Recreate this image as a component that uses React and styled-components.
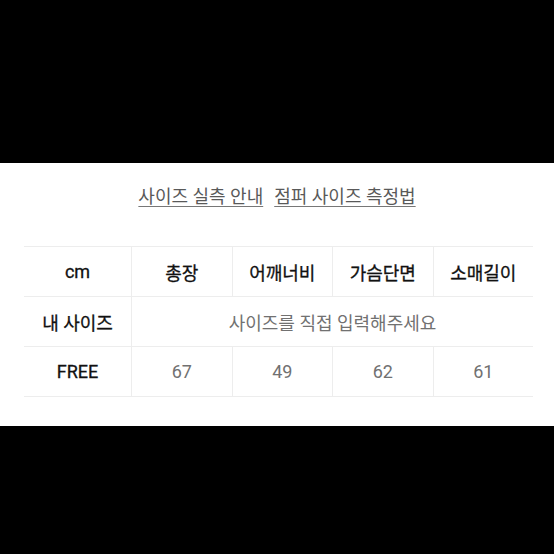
import React from "react";
import styled, { createGlobalStyle } from "styled-components";

const GlobalStyle = createGlobalStyle`
  html, body {
    margin: 0;
    padding: 0;
    background: #000;
  }
  body {
    font-family: Roboto, "Noto Sans CJK KR", sans-serif;
  }
`;

const columns = ["총장", "어깨너비", "가슴단면", "소매길이"];
const freeSize = [67, 49, 62, 61];

const App = () => {
  return (
    <React.Fragment>
      <GlobalStyle />
      <Page>
        <Sheet>
          <GuideLinks>
            <GuideLink href="#">사이즈 실측 안내</GuideLink>
            <GuideLink href="#">점퍼 사이즈 측정법</GuideLink>
          </GuideLinks>
          <SizeTable>
            <Cell $head>cm</Cell>
            {columns.map((name) => (
              <Cell key={name} $head $divided>
                {name}
              </Cell>
            ))}
            <Cell $head>내 사이즈</Cell>
            <Cell $divided $span={4}>
              사이즈를 직접 입력해주세요
            </Cell>
            <Cell $head>FREE</Cell>
            {freeSize.map((value, i) => (
              <Cell key={i} $divided>
                {value}
              </Cell>
            ))}
          </SizeTable>
        </Sheet>
      </Page>
    </React.Fragment>
  );
};

const Page = styled.div`
  width: 100%;
  height: 100vh;
  background: #000;
  padding-top: 163px;
  box-sizing: border-box;
`;

const Sheet = styled.div`
  height: 263px;
  background: #fff;
  padding-top: 21px;
  box-sizing: border-box;
`;

const GuideLinks = styled.div`
  display: flex;
  justify-content: center;
  gap: 11px;
  height: 62px;
`;

const GuideLink = styled.a`
  font-size: 18px;
  line-height: 26px;
  color: #595959;
  text-decoration: underline;
  text-decoration-color: #777;
  text-underline-offset: 3px;
`;

const SizeTable = styled.div`
  display: grid;
  grid-template-columns: 107px repeat(4, 1fr);
  grid-auto-rows: 50px;
  width: 509px;
  margin-left: 24px;
  border-top: 1px solid #ededed;
`;

const Cell = styled.div`
  display: flex;
  align-items: center;
  justify-content: center;
  grid-column: ${(p) => (p.$span ? `span ${p.$span}` : "auto")};
  border-bottom: 1px solid #ededed;
  border-left: ${(p) => (p.$divided ? "1px solid #ededed" : "none")};
  font-size: 18px;
  font-weight: 400;
  color: ${(p) => (p.$head ? "#111" : "#717171")};
  -webkit-text-stroke: ${(p) => (p.$head ? "0.3px #111" : "0")};
`;

export default App;
